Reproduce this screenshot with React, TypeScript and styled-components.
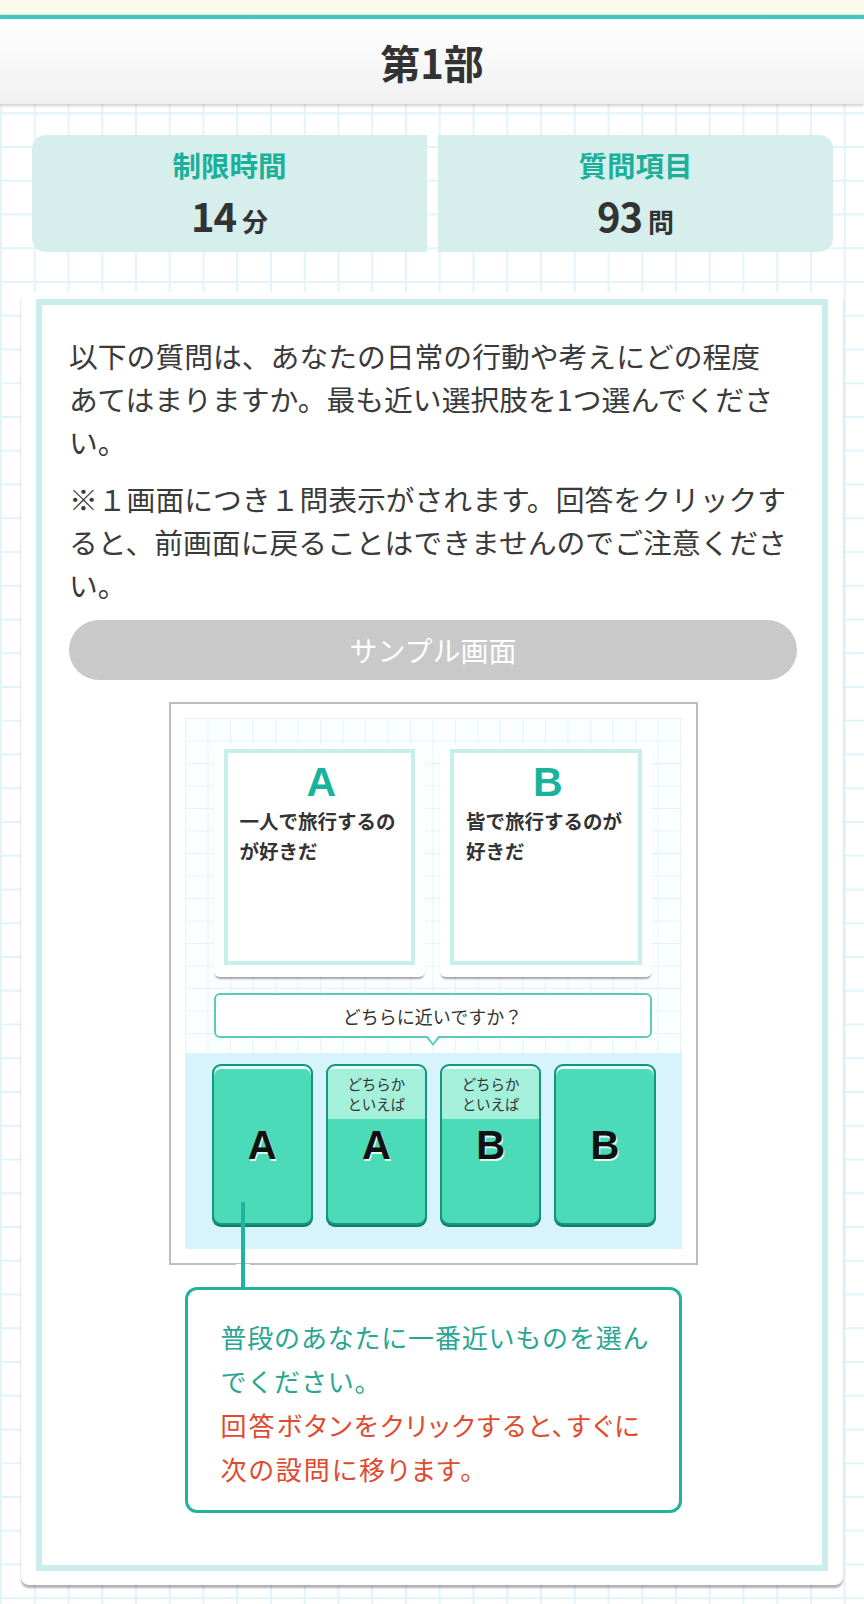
import React from "react";
import styled, { createGlobalStyle } from "styled-components";

const GlobalStyle = createGlobalStyle`
  html, body {
    margin: 0;
    padding: 0;
  }
  body {
    font-family: "Noto Sans CJK JP", "Noto Sans", sans-serif;
    color: #333;
    background-color: #ffffff;
    background-image:
      linear-gradient(to right, #e2f4fa 2px, transparent 2px),
      linear-gradient(to bottom, #e2f4fa 2px, transparent 2px);
    background-size: 33.75px 33.75px;
    background-position: 0 11px;
  }
`;

const Page = styled.div`
  width: 864px;
  min-height: 1604px;
  display: flex;
  flex-direction: column;
`;

const TopStrip = styled.div`
  height: 14px;
  background: #fcfaed;
  border-bottom: 1px solid #e3e8d8;
`;

const TealLine = styled.div`
  height: 4px;
  background: #3cc7c1;
`;

const Header = styled.header`
  height: 85px;
  display: flex;
  align-items: center;
  justify-content: center;
  background: linear-gradient(to bottom, #ffffff 0%, #f1f1f1 100%);
  box-shadow: 0 2px 3px rgba(0, 0, 0, 0.18);
  position: relative;
  z-index: 1;
`;

const Title = styled.h1`
  margin: 0;
  font-size: 40px;
  font-weight: 700;
  color: #333;
`;

const Stats = styled.div`
  display: grid;
  grid-template-columns: 1fr 1fr;
  gap: 11px;
  padding: 31px 31px 0 32px;
`;

const StatCard = styled.div<{ $side: "left" | "right" }>`
  height: 117px;
  background: #d6efed;
  border-radius: ${(p) => (p.$side === "left" ? "14px 0 0 14px" : "0 14px 14px 0")};
  display: flex;
  flex-direction: column;
  align-items: center;
  padding-top: 11px;
  box-sizing: border-box;
`;

const StatLabel = styled.div`
  font-size: 28.5px;
  font-weight: 700;
  color: #1cb09b;
  line-height: 38px;
`;

const StatValue = styled.div`
  display: flex;
  align-items: baseline;
  gap: 6px;
  margin-top: 7px;
  color: #333;
  font-weight: 700;
  line-height: 48px;
`;

const StatNumber = styled.span`
  font-size: 40px;
  letter-spacing: -1px;
`;

const StatUnit = styled.span`
  font-size: 26px;
`;

const Panel = styled.section`
  margin: 40px 21px 0;
  padding: 7px 15px 14px;
  background: #ffffff;
  border-radius: 8px;
  box-shadow: 0 3px 2px rgba(0, 0, 0, 0.3);
`;

const Frame = styled.div`
  border: 6px solid #c9eeec;
  padding: 29px 25px 52px 27px;
  background: #fff;
`;

const Para = styled.p`
  margin: 0 0 14px;
  font-size: 28.8px;
  line-height: 43px;
  color: #3a3a3a;
`;

const SampleButton = styled.div`
  margin-top: 12px;
  height: 60px;
  border-radius: 30px;
  background: #c9c9c9;
  color: #fff;
  font-size: 28px;
  display: flex;
  align-items: center;
  justify-content: center;
`;

const SampleBox = styled.div`
  width: 529px;
  box-sizing: border-box;
  margin: 22px auto 0;
  border: 2px solid #bdbdbd;
  padding: 14px;
  background: #fff;
`;

const Screen = styled.div`
  background-color: #fbfeff;
  background-image:
    linear-gradient(to right, #e6f4f7 1px, transparent 1px),
    linear-gradient(to bottom, #e6f4f7 1px, transparent 1px);
  background-size: 22.5px 22.5px;
  padding: 27px 30px 0 29px;
`;

const Cards = styled.div`
  display: grid;
  grid-template-columns: 1fr 1fr;
  gap: 15px;
`;

const Card = styled.div`
  background: #fff;
  border-radius: 6px;
  padding: 4px 10px 12px;
  box-shadow: 0 3px 2px -1px rgba(0, 0, 0, 0.35);
`;

const CardInner = styled.div`
  height: 216px;
  box-sizing: border-box;
  border: 4px solid #c6efea;
  padding: 7px 8px 0 12px;
`;

const CardLetter = styled.div`
  text-align: center;
  font-family: "Liberation Sans", Arial, sans-serif;
  font-weight: 700;
  font-size: 41px;
  line-height: 44px;
  color: #19b39c;
`;

const CardText = styled.div`
  margin-top: 2px;
  font-size: 19.5px;
  font-weight: 700;
  line-height: 30px;
  color: #333;
`;

const Bubble = styled.div`
  position: relative;
  margin: 16px 0 0;
  height: 45px;
  box-sizing: border-box;
  border: 2px solid #5ccab9;
  border-radius: 6px;
  background: #fff;
  display: flex;
  align-items: center;
  justify-content: center;
  font-size: 18px;
  color: #333;

  &::before,
  &::after {
    content: "";
    position: absolute;
    left: 50%;
    width: 0;
    height: 0;
    border-style: solid;
    transform: translateX(-50%);
  }
  &::before {
    bottom: -10px;
    border-width: 10px 8px 0 8px;
    border-color: #5ccab9 transparent transparent transparent;
  }
  &::after {
    bottom: -7px;
    border-width: 8px 6px 0 6px;
    border-color: #fff transparent transparent transparent;
  }
`;

const BubbleGap = styled.div`
  height: 15px;
`;

const AnswerArea = styled.div`
  background: #d7f3fc;
  padding: 11px 26px 24px 27px;
  display: grid;
  grid-template-columns: repeat(4, 1fr);
  gap: 13px;
`;

const AnswerButton = styled.div`
  height: 161px;
  box-sizing: border-box;
  border: 2px solid #15977e;
  border-radius: 9px;
  background: #4bdbb8;
  box-shadow: inset 0 3px 0 #e6fff7, 0 2px 0 #0f7f69;
  overflow: hidden;
  display: flex;
  flex-direction: column;
`;

const AnswerTop = styled.div<{ $shaded: boolean }>`
  height: 50px;
  margin-top: 3px;
  background: ${(p) => (p.$shaded ? "#a4f0da" : "transparent")};
  display: flex;
  flex-direction: column;
  align-items: center;
  justify-content: center;
  font-size: 14.5px;
  line-height: 20px;
  color: #333;
`;

const AnswerLetter = styled.div`
  text-align: center;
  font-family: "Liberation Sans", Arial, sans-serif;
  font-weight: 700;
  font-size: 40px;
  line-height: 52px;
  color: #111;
  text-shadow: 1px 2px 0 rgba(255, 255, 255, 0.85);
`;

const Callout = styled.div`
  position: relative;
  width: 497px;
  box-sizing: border-box;
  margin: 22px auto 0;
  border: 3px solid #23b29c;
  border-radius: 12px;
  padding: 25px 10px 19px 33px;
  background: #fff;
  font-size: 26px;
  letter-spacing: 0.8px;
  line-height: 44px;
  white-space: nowrap;
`;

const Connector = styled.span`
  position: absolute;
  left: 53px;
  top: -88px;
  width: 4px;
  height: 87px;
  background: #23b29c;
  z-index: 2;
`;

const ConnectorGap = styled.span`
  position: absolute;
  left: 48px;
  top: -26px;
  width: 14px;
  height: 6px;
  background: #fff;
  z-index: 1;
`;

const TealText = styled.span`
  color: #2aa594;
`;

const RedText = styled.span`
  color: #e04a2e;
  font-feature-settings: "palt";
  letter-spacing: 2.1px;
`;

const answers = [
  { letter: "A", shaded: false },
  { letter: "A", shaded: true },
  { letter: "B", shaded: true },
  { letter: "B", shaded: false },
];

export default function App() {
  return (
    <Page>
      <GlobalStyle />
      <TopStrip />
      <TealLine />
      <Header>
        <Title>第1部</Title>
      </Header>

      <Stats>
        <StatCard $side="left">
          <StatLabel>制限時間</StatLabel>
          <StatValue>
            <StatNumber>14</StatNumber>
            <StatUnit>分</StatUnit>
          </StatValue>
        </StatCard>
        <StatCard $side="right">
          <StatLabel>質問項目</StatLabel>
          <StatValue>
            <StatNumber>93</StatNumber>
            <StatUnit>問</StatUnit>
          </StatValue>
        </StatCard>
      </Stats>

      <Panel>
        <Frame>
          <Para>
            以下の質問は、あなたの日常の行動や考えにどの程度
            <br />
            あてはまりますか。最も近い選択肢を1つ選んでくださ
            <br />
            い。
          </Para>
          <Para>
            ※１画面につき１問表示がされます。回答をクリックす
            <br />
            ると、前画面に戻ることはできませんのでご注意くださ
            <br />
            い。
          </Para>
          <SampleButton>サンプル画面</SampleButton>

          <SampleBox>
            <Screen>
              <Cards>
                <Card>
                  <CardInner>
                    <CardLetter>A</CardLetter>
                    <CardText>
                      一人で旅行するの
                      <br />
                      が好きだ
                    </CardText>
                  </CardInner>
                </Card>
                <Card>
                  <CardInner>
                    <CardLetter>B</CardLetter>
                    <CardText>
                      皆で旅行するのが
                      <br />
                      好きだ
                    </CardText>
                  </CardInner>
                </Card>
              </Cards>
              <Bubble>どちらに近いですか？</Bubble>
              <BubbleGap />
            </Screen>
            <AnswerArea>
              {answers.map((a, i) => (
                <AnswerButton key={i}>
                  <AnswerTop $shaded={a.shaded}>
                    {a.shaded && (
                      <>
                        <span>どちらか</span>
                        <span>といえば</span>
                      </>
                    )}
                  </AnswerTop>
                  <AnswerLetter>{a.letter}</AnswerLetter>
                </AnswerButton>
              ))}
            </AnswerArea>
          </SampleBox>

          <Callout>
            <Connector />
            <ConnectorGap />
            <TealText>
              普段のあなたに一番近いものを選ん
              <br />
              でください。
            </TealText>
            <br />
            <RedText>
              回答ボタンをクリックすると、すぐに
              <br />
              次の設問に移ります。
            </RedText>
          </Callout>
        </Frame>
      </Panel>
    </Page>
  );
}
